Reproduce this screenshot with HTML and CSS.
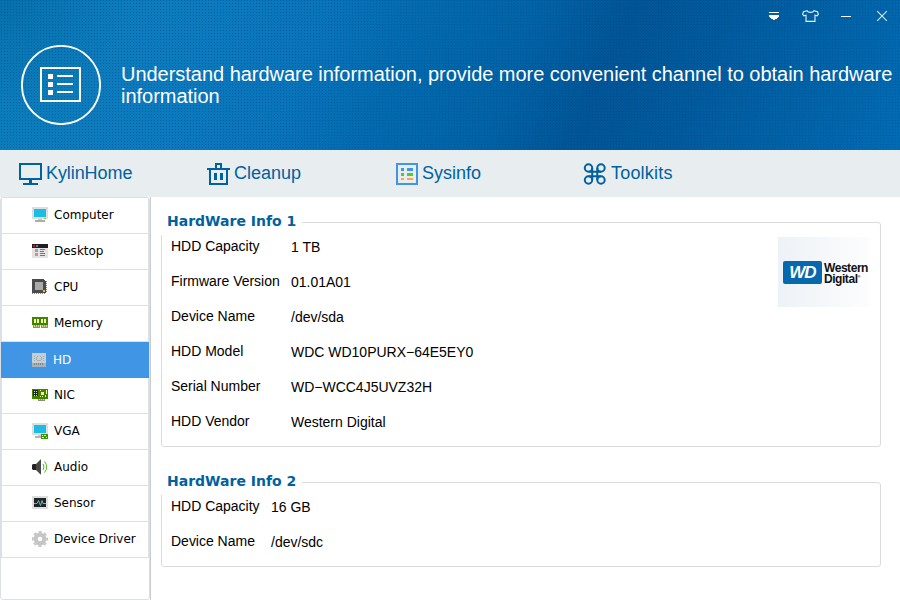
FILE: index.html
```html
<!DOCTYPE html>
<html lang="en">
<head>
<meta charset="utf-8">
<title>Sysinfo</title>
<link rel="stylesheet" href="styles.css">
</head>
<body>
<div class="window">
  <header class="banner">
    <div class="controls">
      <svg width="12" height="12" viewBox="0 0 12 12" shape-rendering="crispEdges"><path d="M1 2h10v1H1zM1 5h10v1H1zM1 6h10v1H1zM2 7h8v1H2zM3 8h6v1H3zM5 9h2v1H5z" fill="#fff"/></svg>
      <svg width="17" height="12" viewBox="0 0 17 12" fill="none" stroke="#e6f0f8" stroke-width="1.1"><path d="M5 .7 1.500 1.700.600 4.200l1.200 1.600 2.200-.6v6.200h9V5.200l2.200.6 1.200-1.600-.9-2.500L12 .7C11 2.900 6 2.900 5 .7z"/></svg>
      <svg width="10" height="12" viewBox="0 0 10 12"><path d="M0 6.500h10" stroke="#fff"/></svg>
      <svg width="12" height="12" viewBox="0 0 12 12"><path d="m1.200 1.200 9.600 9.600M10.800 1.200l-9.600 9.600" stroke="#d8e8f4" stroke-width="1.100"/></svg>
    </div>
    <div class="intro">
      <svg width="80" height="80" viewBox="0 0 80 80"><circle cx="40" cy="40" r="39.100" fill="none" stroke="#fff" stroke-width="1.900"/><g shape-rendering="crispEdges"><path d="M20 23h39v33H20z" fill="none" stroke="#fff" stroke-width="2"/><path d="M27 29h5v5h-5zM27 37h5v5h-5zM27 45h5v5h-5zM36 30h16v2H36zM36 38h16v2H36zM36 46h16v2H36z" fill="#fff"/></g></svg>
      <p>Understand hardware information, provide more convenient channel to obtain hardware information</p>
    </div>
  </header>

  <nav class="tabs">
    <a class="tab"><svg width="23" height="22" viewBox="0 0 23 22" shape-rendering="crispEdges"><path d="M1 1h21v15H1z" fill="none" stroke="#00619f" stroke-width="2"/><path d="M10 17h3v3h6v2H4v-2h6z" fill="#00619f"/></svg><span class="home">KylinHome</span></a>
    <a class="tab"><svg width="23" height="22" viewBox="0 0 23 22" shape-rendering="crispEdges"><path d="M0 5h23v2H0zM8 0h7v5h-2V2h-3v3H8zM7 10h3v7H7zM13 10h3v7h-3z" fill="#00619f"/><path d="M3 6h17v15H3z" fill="none" stroke="#00619f" stroke-width="2"/></svg><span class="cleanup">Cleanup</span></a>
    <a class="tab"><svg width="23" height="22" viewBox="0 0 23 22" shape-rendering="crispEdges"><path d="M2 1h20v20H2z" fill="none" stroke="#4096e5" stroke-width="2"/><path d="M6 5h3v3H6zM12 5h6v3h-6z" fill="#4096e5"/><path d="M6 10h3v3H6zM12 10h6v3h-6z" fill="#55c936"/><path d="M6 15h3v2H6zM12 15h6v2h-6z" fill="#ffa939"/></svg><span>Sysinfo</span></a>
    <a class="tab"><svg width="23" height="22" viewBox="0 0 23 22" fill="none" stroke="#00619f" stroke-width="2"><circle cx="5.500" cy="5" r="3.700"/><circle cx="18" cy="5" r="3.700"/><circle cx="5.500" cy="17" r="3.700"/><circle cx="18" cy="17" r="3.700"/><path d="M9.200 5v12M14.300 5v12M5.500 8.700H18M5.500 13.300H18"/></svg><span class="toolkits">Toolkits</span></a>
  </nav>

  <main class="main">
    <aside class="sidebar">
      <ul class="menu">
        <li><svg class="ico" viewBox="0 0 16 16"><path d="M0 0h16v12H0z" fill="#dedede"/><path d="M2 2h12v8H2z" fill="#1cbde5"/><path d="M6 12h4v1H6z" fill="#c8c8c8"/><path d="M3 13h10v2H3z" fill="#adadad"/><path d="M12 11h2v1h-2z" fill="#78d82b"/></svg>Computer</li>
        <li><svg class="ico" viewBox="0 0 16 16"><path d="M0 1h16v14H0z" fill="#e3e3e3"/><path d="M0 1h16v4H0z" fill="#1d1e23"/><path d="M1 2h2v2H1z" fill="#f00"/><path d="M4 2h2v2H4z" fill="#777"/><path d="M3 6h3v3H3z" fill="#64aeea"/><path d="M3 10h3v3H3z" fill="#ff8163"/><path d="M8 6h5v1H8zM8 8h4v1H8zM8 10h5v1H8zM8 12h5v1H8z" fill="#777"/></svg>Desktop</li>
        <li><svg class="ico" viewBox="0 0 16 16"><path d="M0 14h1v1H0zM2 14h1v1H2zM4 14h1v1H4zM6 14h1v1H6zM8 14h1v1H8zM10 14h1v1h-1zM12 14h1v1h-1zM14 2h1v1h-1zM14 4h1v1h-1zM14 6h1v1h-1zM14 8h1v1h-1zM14 10h1v1h-1zM14 12h1v1h-1z" fill="#bd8617"/><path d="M0 0h12v1h1v1h1v12H0z" fill="#4b4b4b"/><path d="M3 3h8v8H3z" fill="#aaa"/><path d="M11 11h2v2h-2z" fill="#ffb528"/></svg>CPU</li>
        <li><svg class="ico" viewBox="0 0 16 16"><path d="M0 2h16v8H0z" fill="#3f8500"/><path d="M2 4h2v4H2zM5 4h2v4H5zM9 4h2v4H9zM12 4h2v4h-2z" fill="#f4f3ae"/><path d="M1 10h7v3H1zM9 10h7v3H9z" fill="#929071"/><path d="M2 10h1v2H2zM4 10h1v2H4zM6 10h1v2H6zM10 10h1v2h-1zM12 10h1v2h-1zM14 10h1v2h-1z" fill="#d8d09c"/></svg>Memory</li>
        <li class="selected"><svg class="ico" viewBox="0 0 16 16"><path d="M0 1h14v14H0z" fill="#a8b2b6"/><path d="M0 1h14v10H0z" fill="#c5ced2"/><path d="M5 4h1v1H5zM8 4h1v1H8zM4 5h1v3H4zM9 5h1v3H9zM5 8h4v1H5zM2 4h1v1H2zM12 4h-1v1h1zM2 6h1v1H2zM11 6h1v1h-1zM2 8h1v1H2zM11 8h1v1h-1z" fill="#a2afb5"/><path d="M2 11h1v2H2zM4 11h1v2H4zM6 11h1v2H6zM8 11h1v2H8zM10 11h1v2h-1z" fill="#7b898f"/></svg>HD</li>
        <li><svg class="ico" viewBox="0 0 16 16"><path d="M0 2h16v10H0z" fill="#3f8500"/><path d="M1 3h5v6H1z" fill="#222"/><path d="M2 4h1v1H2zM4 4h1v1H4zM2 6h1v1H2zM4 6h1v1H4zM2 8h1v1H2zM4 8h1v1H4z" fill="#ddf0a0"/><path d="M9 5h3v3H9zM8 3h1v1H8zM14 3h1v4h-1zM8 9h1v1H8zM13 8h1v2h-1zM10 9h1v1h-1z" fill="#edf4a5"/><path d="M6 12h7v2H6z" fill="#92887b"/><path d="M7 12h1v1H7zM9 12h1v1H9zM11 12h1v1h-1z" fill="#ded29e"/></svg>NIC</li>
        <li><svg class="ico" viewBox="0 0 16 16"><path d="M0 0h16v12H0z" fill="#dedede"/><path d="M2 2h12v8H2z" fill="#1cbde5"/><path d="M3 13h6v2H3z" fill="#b5b5b5"/><path d="M6 12h4v1H6z" fill="#ccc"/><path d="M9 11h7v5H9z" fill="#3f9500"/><path d="M10 12h1v1h-1zM12 12h2v1h-2zM10 14h2v1h-2zM14 14h1v1h-1z" fill="#e5f7aa"/></svg>VGA</li>
        <li><svg class="ico smooth" viewBox="0 0 16 16"><path d="M0 6 1 5h3v6H1L0 10z" fill="#222"/><path d="M4 5 8.500.500H9v15h-.5L4 11z" fill="#484848"/><path d="M11 5q2 3 0 6M12.500 2.500q4.500 5.500 0 11" fill="none" stroke="#55b918"/></svg>Audio</li>
        <li><svg class="ico" viewBox="0 0 16 16"><path d="M0 1h16v13H0z" fill="#dedede"/><path d="M2 3h12v9H2z" fill="#202329"/><path class="smooth" d="M2 8.500h3l1.500-3 2 5 1.500-5 1 3h3" fill="none" stroke="#57c6a1"/></svg>Sensor</li>
        <li><svg class="ico smooth" viewBox="0 0 16 16"><circle cx="8" cy="8" r="4.300" fill="none" stroke="#c6c4c4" stroke-width="4"/><circle cx="8" cy="8" r="7.100" fill="none" stroke="#c6c4c4" stroke-width="1.800" stroke-dasharray="3.300 2.276" stroke-dashoffset="1.650"/></svg>Device Driver</li>
      </ul>
    </aside>
    <div class="content">
      <section class="group first">
        <h2>HardWare Info 1</h2>
        <div class="body">
          <dl>
            <dt>HDD Capacity</dt><dd>1 TB</dd>
            <dt>Firmware Version</dt><dd>01.01A01</dd>
            <dt>Device Name</dt><dd>/dev/sda</dd>
            <dt>HDD Model</dt><dd>WDC WD10PURX−64E5EY0</dd>
            <dt>Serial Number</dt><dd>WD−WCC4J5UVZ32H</dd>
            <dt>HDD Vendor</dt><dd>Western Digital</dd>
          </dl>
          <div class="vendor">
            <span class="wd">WD</span>
            <div class="wdname">
              <span>Western</span>
              <div class="line"><span class="digital">Digital</span><span class="reg">®</span></div>
            </div>
          </div>
        </div>
      </section>
      <section class="group second">
        <h2>HardWare Info 2</h2>
        <div class="body">
          <dl>
            <dt>HDD Capacity</dt><dd>16 GB</dd>
            <dt>Device Name</dt><dd>/dev/sdc</dd>
          </dl>
        </div>
      </section>
    </div>
  </main>
</div>
</body>
</html>
```
FILE: styles.css
```css
* { box-sizing: border-box; }
body { margin: 0; background: #fff; font-family: "Liberation Sans", Arial, sans-serif; }
svg { display: block; flex: none; }
.window { width: 900px; height: 600px; display: flex; flex-direction: column; overflow: hidden; }

.banner {
  height: 150px;
  flex: none;
  color: #fff;
  background:
    conic-gradient(from 270deg at 1px 1px, rgba(0, 56, 120, .38) 90deg, transparent 0) 1px 0 / 3px 3px,
    radial-gradient(ellipse 130px 110px at 0 0, rgba(0, 105, 165, .6), transparent),
    linear-gradient(112deg, #0b7db9 0%, #0c7bbe 20%, #0874ba 34%, #0169ad 46%, #0063a6 56%, #005596 66%, #005a9c 75%, #0062a6 87%, #006cb4 100%);
}
.controls { height: 32px; padding: 10px 12px 0 0; display: flex; justify-content: flex-end; }
.controls svg { margin-left: 24px; }
.controls svg:nth-child(2) { margin-left: 22px; }
.controls svg:nth-child(3) { margin-left: 22px; }
.controls svg:nth-child(4) { margin: 0 0 0 25px; }
.intro { display: flex; padding: 13px 0 0 21px; gap: 20px; }
.intro p { margin: 18px 0 0; width: 779px; font-size: 20px; line-height: 22px; letter-spacing: -.03px; }

.tabs { height: 47px; flex: none; display: flex; background: #e8edf0; padding-left: 19px; }
.tab { width: 188px; display: flex; padding-top: 13px; color: #00619f; font-size: 18px; line-height: 20px; }
.tab span { margin-left: 4px; }
.tab .home { letter-spacing: -.08px; }
.tab .toolkits { margin-left: 5px; letter-spacing: .2px; }

.main { flex: 1; display: flex; min-height: 0; }
.sidebar { width: 151px; flex: none; border-right: 1px solid #ccc; }
.menu { list-style: none; margin: 0; padding: 0; height: 403px; border: 1px solid #dce0e3; border-radius: 3px; }
.menu li {
  height: 36px;
  display: flex;
  align-items: center;
  gap: 6px;
  padding: 0 0 1px 30px;
  border: solid #d6e3ec;
  border-width: 0 1px 1px;
  font: 12px "DejaVu Sans", sans-serif;
  color: #000;
  white-space: nowrap;
}
.menu li.selected { background: #4096e5; color: #fff; border-color: #4096e5; padding-bottom: 0; gap: 5px; }
.ico { width: 16px; height: 16px; shape-rendering: crispEdges; }
.smooth { shape-rendering: auto; }

.content { flex: 1; padding: 25px 19px 0 10px; }
.group { border: 1px solid #dcdcdc; border-radius: 3px; }
.first { height: 225px; margin-bottom: 35px; }
.second { height: 85px; }
.group h2 {
  width: 141px;
  height: 24px;
  margin: -12px 0 0 -1px;
  padding-left: 6px;
  background: #fff;
  color: #00619f;
  font: bold 14px/20px "DejaVu Sans", sans-serif;
  white-space: nowrap;
}
.body { display: flex; justify-content: space-between; padding: 0 10px 0 9px; }
dl { margin: -6px 0 0; display: grid; grid-template-columns: 120px auto; grid-auto-rows: 35px; font-size: 14px; line-height: 35px; letter-spacing: -.01px; color: #000; }
.second dl { grid-template-columns: 100px auto; }
dt, dd { margin: 0; white-space: nowrap; }
dd { padding-top: 1px; }
.vendor { width: 92px; height: 70px; margin-top: 2px; display: flex; align-items: center; gap: 2px; padding-left: 5px; background: linear-gradient(90deg, #edf2f6, #fdfdfe); }
.wd { width: 39px; height: 23px; border-radius: 2px; background: #0669ae; color: #fff; font: italic bold 17px/23px "Liberation Sans", sans-serif; letter-spacing: -1px; text-align: center; }
.wdname { display: flex; flex-direction: column; font-weight: bold; font-size: 12px; line-height: 11px; letter-spacing: -.45px; color: #111; padding-top: 3px; }
.line { display: flex; }
.reg { font-size: 4px; line-height: 5px; letter-spacing: 0; }
```
